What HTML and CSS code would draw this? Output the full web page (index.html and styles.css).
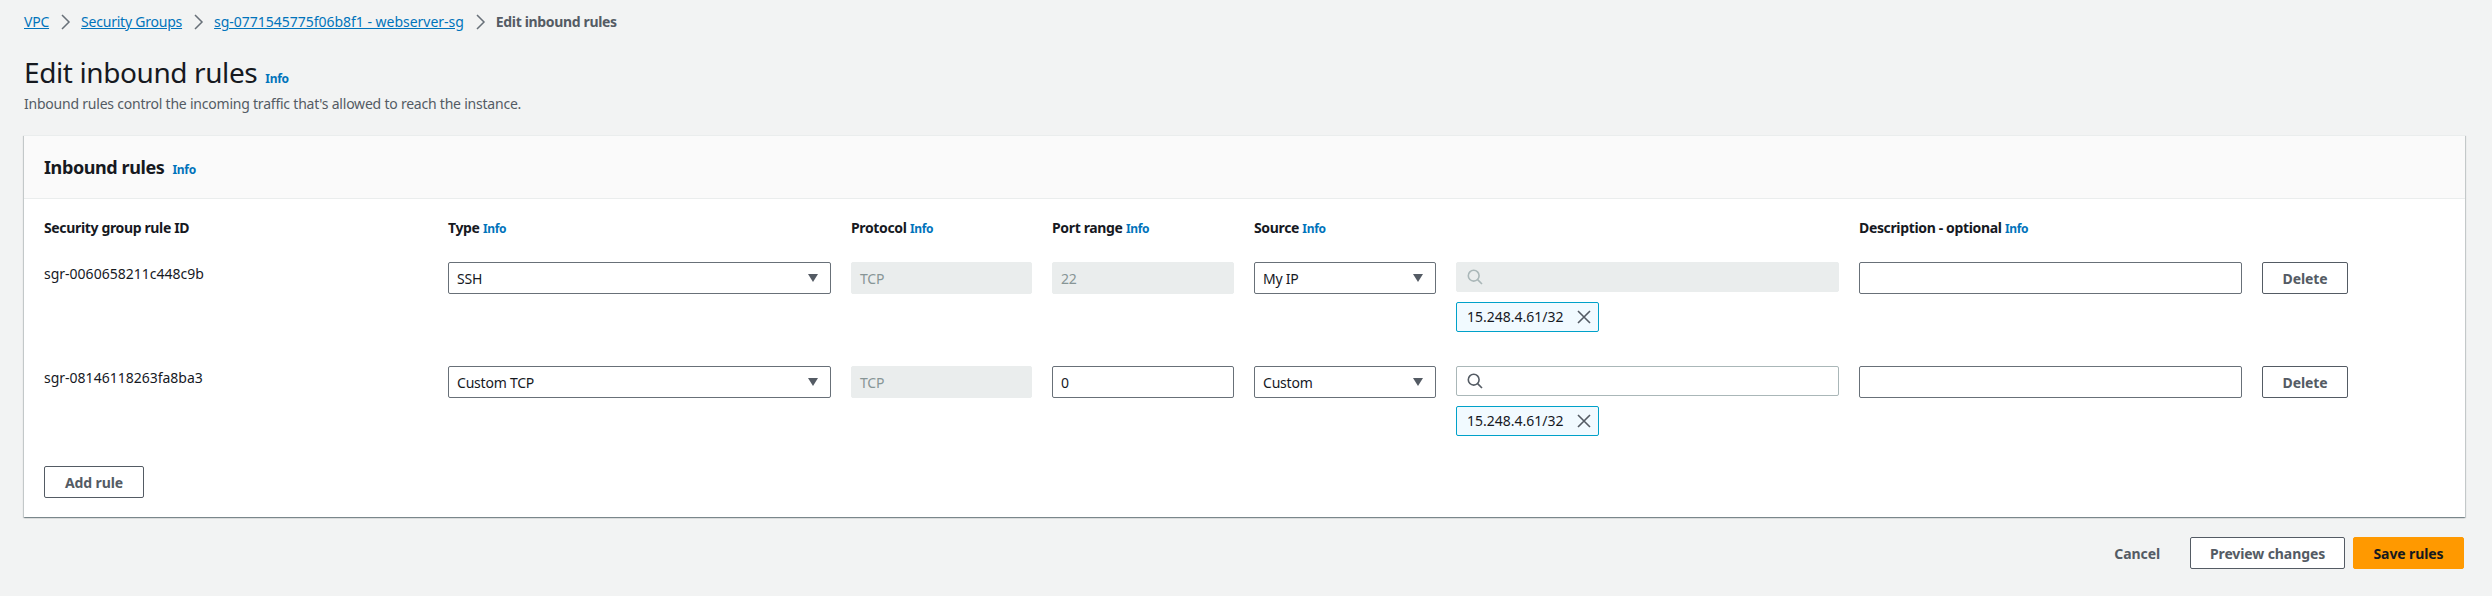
FILE: index.html
```html
<!DOCTYPE html>
<html>
<head>
    <title>Edit inbound rules</title>
    <link rel="stylesheet" href="styles.css">
</head>
<body>
    <svg class="icon-defs" width="0" height="0">
        <symbol id="chevron" viewBox="0 0 16 16"><path d="M5 1l7 7-7 7" fill="none" stroke="currentColor" stroke-width="1.5"/></symbol>
        <symbol id="caret" viewBox="0 0 10 8"><path d="M0 0h10L5 8z" fill="currentColor"/></symbol>
        <symbol id="search" viewBox="0 0 16 16"><circle cx="6.7" cy="6.7" r="5.4" fill="none" stroke="currentColor" stroke-width="1.6"/><path d="M10.6 10.6l4.4 4.4" fill="none" stroke="currentColor" stroke-width="1.6"/></symbol>
        <symbol id="close" viewBox="0 0 14 14"><path d="M1 1l12 12M13 1L1 13" fill="none" stroke="currentColor" stroke-width="1.6"/></symbol>
    </svg>

    <nav class="breadcrumbs">
        <a href="#">VPC</a>
        <svg class="chevron"><use href="#chevron"/></svg>
        <a href="#">Security Groups</a>
        <svg class="chevron"><use href="#chevron"/></svg>
        <a class="sg-link" href="#">sg-0771545775f06b8f1 - webserver-sg</a>
        <svg class="chevron"><use href="#chevron"/></svg>
        <span class="current">Edit inbound rules</span>
    </nav>

    <h1>Edit inbound rules <a class="info" href="#">Info</a></h1>
    <p class="subtitle">Inbound rules control the incoming traffic that's allowed to reach the instance.</p>

    <section class="card">
        <div class="card-header">
            <h2>Inbound rules <a class="info" href="#">Info</a></h2>
        </div>
        <div class="card-body">
            <div class="rule-grid labels">
                <div class="label">Security group rule ID</div>
                <div class="label">Type <a class="info" href="#">Info</a></div>
                <div class="label">Protocol <a class="info" href="#">Info</a></div>
                <div class="label">Port range <a class="info" href="#">Info</a></div>
                <div class="label">Source <a class="info" href="#">Info</a></div>
                <div></div>
                <div class="label">Description - optional <a class="info" href="#">Info</a></div>
                <div></div>
            </div>

            <div class="rule-grid rule">
                <div class="rule-id">sgr-0060658211c448c9b</div>
                <div class="field select">SSH<svg class="caret"><use href="#caret"/></svg></div>
                <div class="field disabled">TCP</div>
                <div class="field disabled">22</div>
                <div class="field select">My IP<svg class="caret"><use href="#caret"/></svg></div>
                <div class="source">
                    <div class="search disabled"><svg class="search-icon"><use href="#search"/></svg></div>
                    <div class="tag">15.248.4.61/32<svg class="close"><use href="#close"/></svg></div>
                </div>
                <div class="field"></div>
                <button class="btn delete">Delete</button>
            </div>

            <div class="rule-grid rule">
                <div class="rule-id">sgr-08146118263fa8ba3</div>
                <div class="field select">Custom TCP<svg class="caret"><use href="#caret"/></svg></div>
                <div class="field disabled">TCP</div>
                <div class="field">0</div>
                <div class="field select">Custom<svg class="caret"><use href="#caret"/></svg></div>
                <div class="source">
                    <div class="search"><svg class="search-icon"><use href="#search"/></svg></div>
                    <div class="tag">15.248.4.61/32<svg class="close"><use href="#close"/></svg></div>
                </div>
                <div class="field"></div>
                <button class="btn delete">Delete</button>
            </div>

            <button class="btn add-rule">Add rule</button>
        </div>
    </section>

    <footer class="actions">
        <button class="btn link">Cancel</button>
        <button class="btn preview">Preview changes</button>
        <button class="btn primary">Save rules</button>
    </footer>
</body>
</html>
```

FILE: styles.css
```css
body {
    margin: 0;
    padding: 12px 27px 0 24px;
    height: 596px;
    box-sizing: border-box;
    overflow: hidden;
    background-color: #f2f3f3;
    color: #16191f;
    font-family: "Noto Sans", Arial, sans-serif;
    font-size: 14px;
    line-height: 20px;
    letter-spacing: -0.22px;
}

a {
    color: #0073bb;
}

.icon-defs {
    position: absolute;
}

.breadcrumbs {
    display: flex;
    align-items: center;
    height: 20px;
}

.sg-link {
    letter-spacing: -0.02px;
}

.chevron {
    width: 16px;
    height: 16px;
    margin: 0 8px;
    color: #687078;
}

.current {
    color: #545b64;
    font-weight: 700;
    letter-spacing: -0.35px;
}

h1 {
    display: flex;
    align-items: baseline;
    gap: 8px;
    height: 36px;
    margin: 22px 0 0;
    font-size: 28px;
    line-height: 36px;
    font-weight: 400;
    letter-spacing: -0.4px;
}

.info {
    font-size: 12px;
    font-weight: 700;
    text-decoration: none;
    letter-spacing: -0.3px;
}

.subtitle {
    margin: 4px 0 0;
    color: #545b64;
}

.card {
    margin-top: 21px;
    height: 382px;
    box-sizing: border-box;
    background-color: #fff;
    border-top: 1px solid #eaeded;
    box-shadow: 0 1px 1px 0 rgba(0, 28, 36, 0.3), 1px 1px 1px 0 rgba(0, 28, 36, 0.15), -1px 1px 1px 0 rgba(0, 28, 36, 0.15);
}

.card-header {
    height: 63px;
    box-sizing: border-box;
    padding: 20px;
    background-color: #fafafa;
    border-bottom: 1px solid #eaeded;
}

h2 {
    display: flex;
    align-items: baseline;
    gap: 8px;
    margin: 0;
    font-size: 18px;
    line-height: 22px;
    font-weight: 700;
    letter-spacing: -0.4px;
}

.card-body {
    padding: 19px 20px 20px;
}

.rule-grid {
    display: grid;
    grid-template-columns: 384px 383px 181px 182px 182px 383px 383px 86px;
    column-gap: 20px;
}

.labels {
    height: 20px;
    margin-bottom: 24px;
}

.label {
    font-weight: 700;
    letter-spacing: -0.35px;
}

.rule {
    height: 70px;
    margin-bottom: 34px;
}

.rule-id {
    line-height: 24px;
    letter-spacing: 0;
}

.field {
    display: flex;
    align-items: center;
    justify-content: space-between;
    height: 32px;
    box-sizing: border-box;
    padding: 1px 12px 0 8px;
    border: 1px solid #687078;
    border-radius: 2px;
    background-color: #fff;
}

.field.disabled {
    background-color: #eaeded;
    border-color: #eaeded;
    color: #879596;
}

.caret {
    width: 10px;
    height: 8px;
    margin-top: -2px;
    color: #545b64;
}

.search {
    display: flex;
    align-items: center;
    height: 30px;
    box-sizing: border-box;
    padding-left: 10px;
    border: 1px solid #aab7b8;
    border-radius: 2px;
    color: #545b64;
}

.search.disabled {
    background-color: #eaeded;
    border-color: #eaeded;
    color: #aab7b8;
}

.search-icon {
    width: 16px;
    height: 16px;
}

.tag {
    display: inline-flex;
    align-items: center;
    height: 30px;
    width: 143px;
    box-sizing: border-box;
    margin-top: 10px;
    padding: 0 7px 0 10px;
    border: 1px solid #00a1c9;
    border-radius: 2px;
    background-color: #f1faff;
    letter-spacing: 0;
}

.close {
    width: 14px;
    height: 14px;
    margin-left: auto;
    color: #545b64;
}

.btn {
    height: 32px;
    box-sizing: border-box;
    padding: 0 20px;
    border: 1px solid #545b64;
    border-radius: 2px;
    background-color: #fff;
    color: #545b64;
    font-family: inherit;
    font-size: 14px;
    font-weight: 700;
    letter-spacing: -0.1px;
}

.delete {
    padding: 0;
}

.add-rule {
    width: 100px;
    padding: 0;
    display: block;
    margin-top: -4px;
}

.actions {
    display: flex;
    justify-content: flex-end;
    align-items: center;
    margin-top: 20px;
    padding-right: 1px;
}

.link {
    border: none;
    background: none;
    padding: 0;
    margin-right: 30px;
}

.preview {
    width: 155px;
    padding: 0;
    margin-right: 8px;
}

.primary {
    width: 111px;
    padding: 0;
    background-color: #f90;
    border-color: #f90;
    color: #16191f;
}
```
